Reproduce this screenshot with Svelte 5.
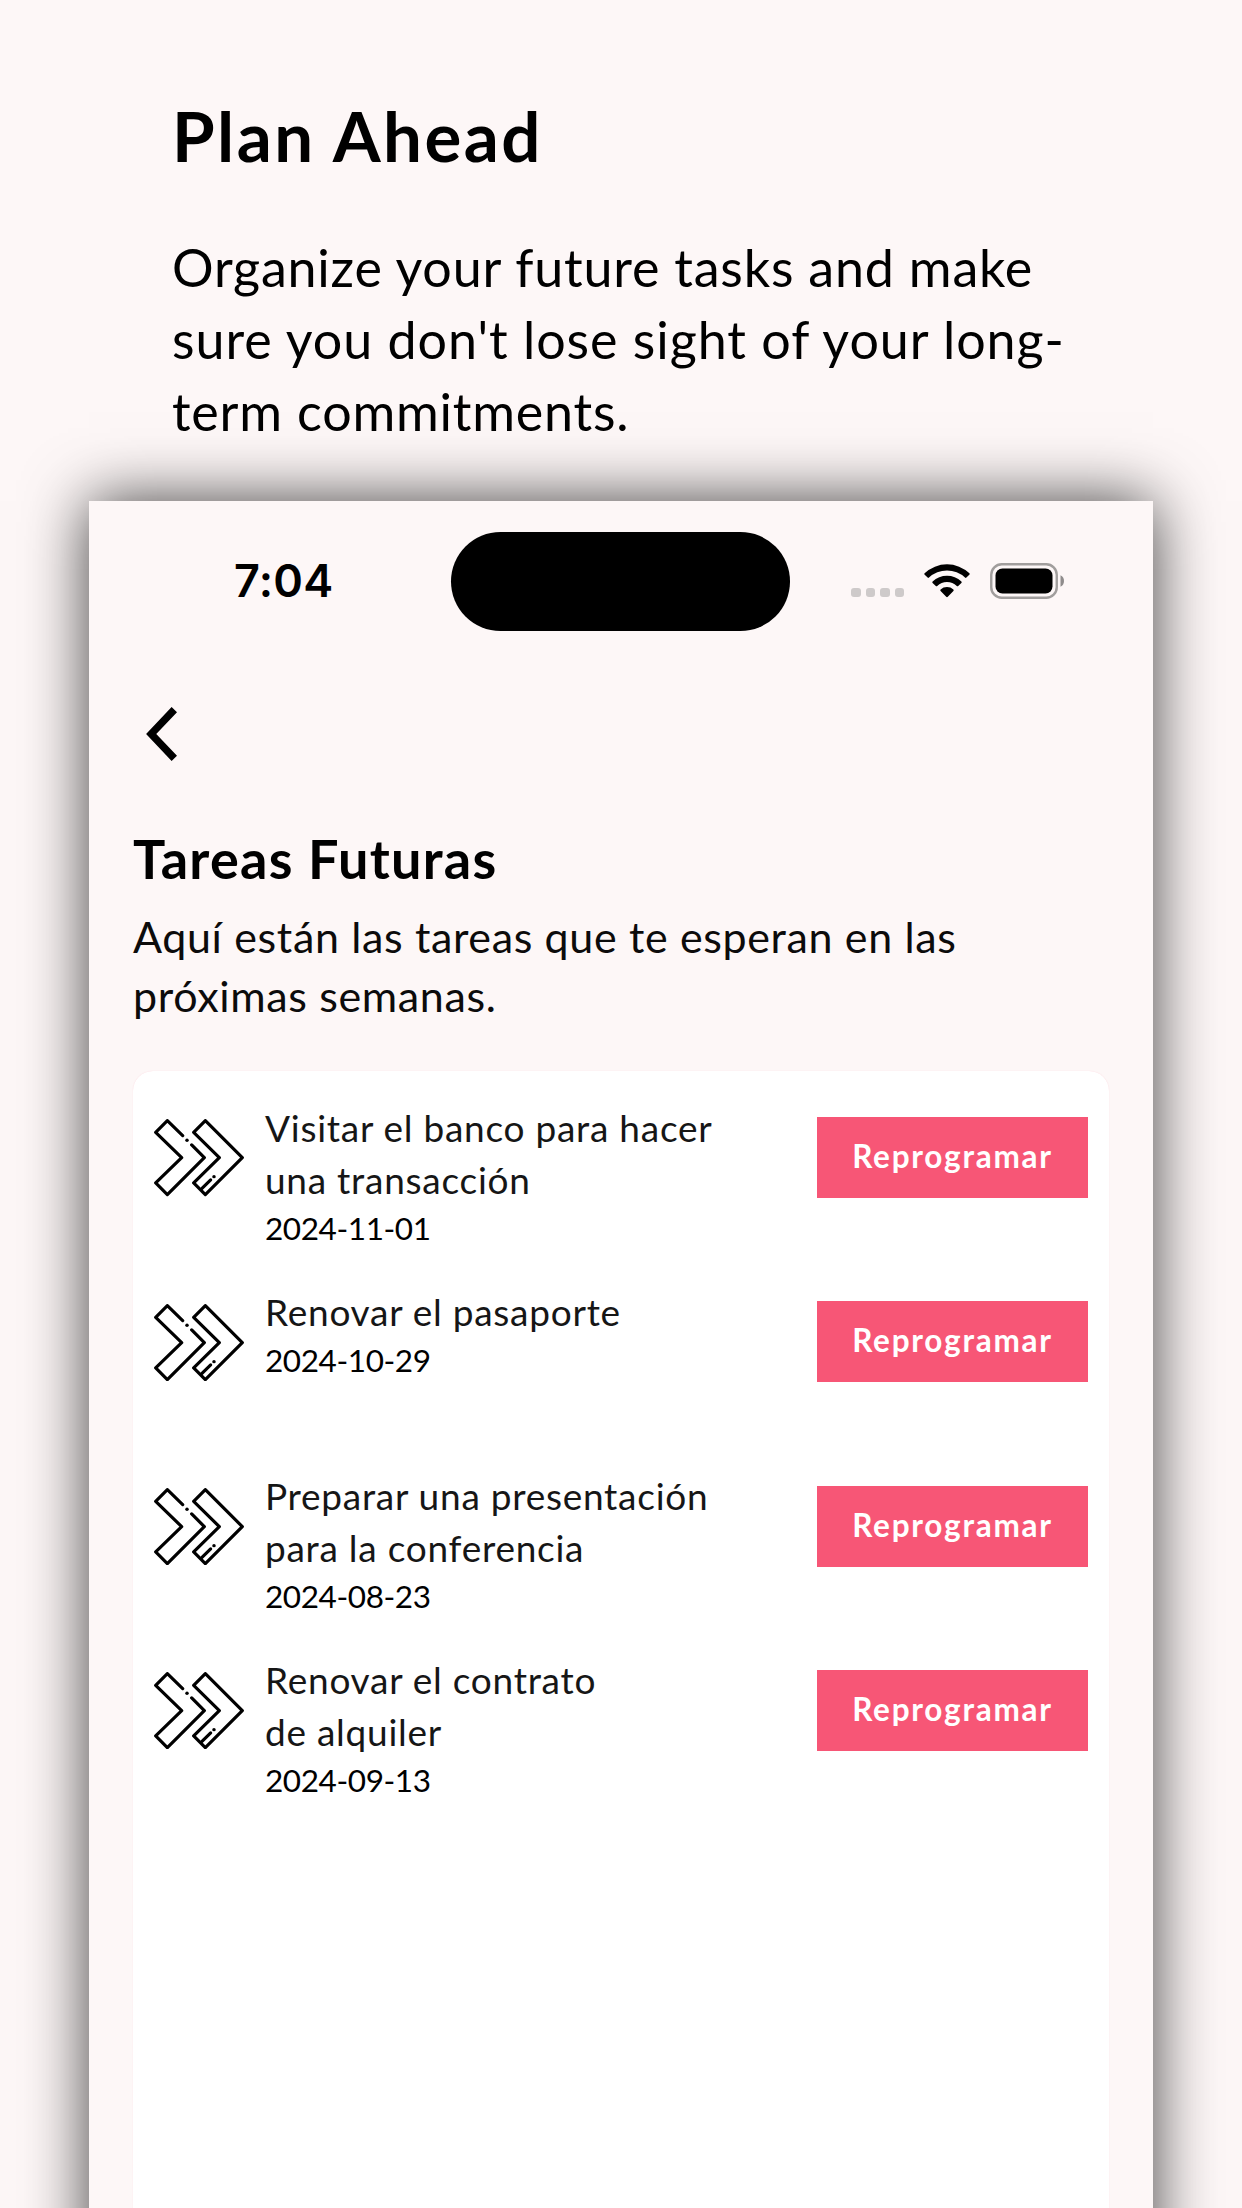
<script>
  const tasks = [
    { lines: ['Visitar el banco para hacer', 'una transacción'], date: '2024-11-01' },
    { lines: ['Renovar el pasaporte'], date: '2024-10-29' },
    { lines: ['Preparar una presentación', 'para la conferencia'], date: '2024-08-23' },
    { lines: ['Renovar el contrato', 'de alquiler'], date: '2024-09-13' },
  ];
</script>

<main class="page">
  <header class="intro">
    <h1>Plan Ahead</h1>
    <p>Organize your future tasks and make<br /><span class="wide">sure you don't lose sight of your long-</span><br />term commitments.</p>
  </header>

  <section class="phone">
    <div class="status">
      <div class="time">7:04</div>
      <div class="island"></div>
      <div class="indicators">
        <div class="signal"><i></i><i></i><i></i><i></i></div>
        <svg class="wifi" viewBox="0 0 46 34" aria-hidden="true">
          <path d="M0.6 9.3 A32.5 32.5 0 0 1 45.4 9.3 Q46 10 45.3 10.8 L42.4 13.6 Q41.7 14.2 41 13.6 A26.2 26.2 0 0 0 5 13.6 Q4.3 14.2 3.6 13.6 L0.7 10.8 Q0 10 0.6 9.3 Z" />
          <path d="M8.6 17.4 A21 21 0 0 1 37.4 17.4 Q38.1 18.2 37.4 18.9 L34.2 22 Q33.5 22.6 32.8 22 A14.3 14.3 0 0 0 13.2 22 Q12.5 22.6 11.8 22 L8.6 18.9 Q7.9 18.2 8.6 17.4 Z" />
          <path d="M16.6 25.6 A9.5 9.5 0 0 1 29.4 25.6 Q30.1 26.4 29.4 27.1 L23.8 32.8 Q23 33.5 22.2 32.8 L16.6 27.1 Q15.9 26.4 16.6 25.6 Z" />
        </svg>
        <svg class="battery" viewBox="0 0 75 36" aria-hidden="true">
          <rect x="1.25" y="1.25" width="65.5" height="33.5" rx="10.5" fill="none" stroke="#a19e9d" stroke-width="2.4" />
          <rect x="5.5" y="5.5" width="57" height="25" rx="7" />
          <path d="M70.5 12.3 Q74 14 74 18 Q74 22 70.5 23.7 Z" fill="#8f8c8c" />
        </svg>
      </div>
    </div>

    <svg class="back" viewBox="0 0 32 54" aria-label="Back">
      <path d="M28.3 2.6 L5.2 27 L28.3 51.4" fill="none" stroke="#000" stroke-width="7.4" />
    </svg>

    <h2>Tareas Futuras</h2>
    <p class="sub">Aquí están las tareas que te esperan en las<br />próximas semanas.</p>

    <ul class="card">
      {#each tasks as task}
        <li>
          <svg class="arrows" viewBox="42 57 270 232" aria-hidden="true">
            <g fill="none" stroke="#000" stroke-width="9.6" stroke-linecap="round" stroke-linejoin="round">
              <path d="M128 107 L82 62 L47 97 L125 173 L47 249 L82 284 L193 173 L155 135" />
              <path d="M196 62 L161 97 L238 173 L161 249 L196 284 L307 173 Z" />
              <path d="M186 265 L212 240" />
            </g>
            <circle cx="141" cy="121" r="5.2" />
            <circle cx="222" cy="230" r="5.2" />
          </svg>
          <div class="text">
            {#each task.lines as line}<div class="name">{line}</div>{/each}
            <div class="date">{task.date}</div>
          </div>
          <button>Reprogramar</button>
        </li>
      {/each}
    </ul>
  </section>
</main>

<style>
  :global(body) {
    background: #fdf7f7;
  }
  .page {
    box-sizing: border-box;
    display: flex;
    flex-direction: column;
    width: 1242px;
    height: 2208px;
    overflow: hidden;
    padding: 94px 89px 0;
    background: #fdf7f7;
    color: #000;
    font-family: Lato, 'Open Sans', sans-serif;
    font-kerning: normal;
  }
  h1, h2, p, ul {
    margin: 0;
    padding: 0;
  }
  .intro {
    height: 407px;
    flex: none;
    padding-left: 83px;
    white-space: nowrap;
  }
  h1 {
    font-size: 69px;
    line-height: 84px;
    letter-spacing: 2.5px;
    margin-bottom: 53px;
  }
  .intro p {
    font-size: 52px;
    line-height: 72px;
    letter-spacing: 0.8px;
  }
  .wide {
    letter-spacing: 0.97px;
  }
  .phone {
    box-sizing: border-box;
    flex: none;
    display: flex;
    flex-direction: column;
    height: 1900px;
    padding: 31px 44px 0;
    background: #fdf7f7;
    box-shadow: 0 0 60px rgba(0, 0, 0, 0.75);
  }
  .status {
    display: grid;
    grid-template-columns: 318px 339px 1fr;
    align-items: center;
    height: 99px;
  }
  .time {
    padding: 0 0 1px 101px;
    font: 600 45px/54px Inter, sans-serif;
    letter-spacing: 0.25px;
  }
  .island {
    height: 99px;
    border-radius: 50px;
    background: #000;
  }
  .indicators {
    display: flex;
    align-items: flex-end;
    padding: 0 0 2px 61px;
    height: 36px;
  }
  .signal {
    display: flex;
    gap: 5px;
    width: 73px;
    padding-bottom: 1.5px;
  }
  .signal i {
    width: 9.5px;
    height: 9.5px;
    border-radius: 3px;
    background: #cecaca;
  }
  .wifi {
    width: 46px;
    height: 34px;
    margin-bottom: 1px;
  }
  .battery {
    width: 75px;
    height: 36px;
    margin-left: 19.5px;
  }
  .back {
    width: 32px;
    height: 54px;
    margin: 76px 0 0 13px;
  }
  h2 {
    margin-top: 65px;
    font-size: 54px;
    line-height: 66px;
    letter-spacing: 1.25px;
  }
  .sub {
    margin-top: 16px;
    font-size: 43px;
    line-height: 58.8px;
    letter-spacing: 0.64px;
    color: #0c0b0b;
  }
  .card {
    box-sizing: border-box;
    flex: 1;
    margin-top: 45.4px;
    padding: 31px 21px 0;
    border-radius: 20px 20px 0 0;
    background: #fff;
    box-shadow: 0 0 1px rgba(247, 86, 118, 0.25);
    list-style: none;
  }
  li {
    display: flex;
    align-items: flex-start;
    height: 184.1px;
  }
  .arrows {
    width: 90px;
    height: 77.3px;
    margin-top: 17.5px;
  }
  .text {
    flex: 1;
    padding-left: 21px;
    white-space: nowrap;
  }
  .name {
    font-size: 37px;
    line-height: 51.6px;
    letter-spacing: 0.74px;
    color: #161616;
  }
  .date {
    margin-top: 2.6px;
    font-size: 31.5px;
    line-height: 40px;
    letter-spacing: -0.4px;
  }
  button {
    width: 271px;
    height: 81px;
    margin-top: 15.4px;
    padding: 0 0 3px;
    border: 0;
    background: #f75676;
    color: #fff;
    font: bold 31.5px/40px Lato, sans-serif;
    letter-spacing: 1.75px;
  }
</style>
